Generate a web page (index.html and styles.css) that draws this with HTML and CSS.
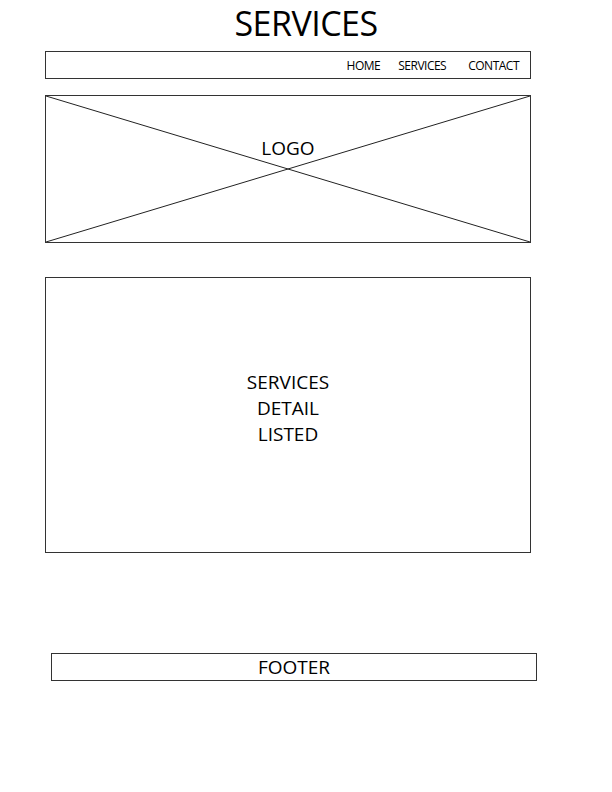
FILE: index.html
```html
<!DOCTYPE html>
<html lang="en">
  <head>
    <meta charset="UTF-8" />
    <meta name="viewport" content="width=device-width, initial-scale=1.0" />
    <title>Services</title>
    <link rel="stylesheet" href="styles.css">
  </head>
  <body>
    <h1 class="page-title">SERVICES</h1>
    <nav class="frame nav-bar">
      <a href="#">HOME</a>
      <a href="#">SERVICES</a>
      <a class="nav-last" href="#">CONTACT</a>
    </nav>
    <div class="frame logo-box">
      <svg class="cross" viewBox="0 0 100 100" preserveAspectRatio="none">
        <line x1="0" y1="0" x2="100" y2="100" vector-effect="non-scaling-stroke" />
        <line x1="100" y1="0" x2="0" y2="100" vector-effect="non-scaling-stroke" />
      </svg>
      <span class="logo-text">LOGO</span>
    </div>
    <main class="frame services-box">
      <p>SERVICES<br>DETAIL<br>LISTED</p>
    </main>
    <footer class="frame footer-bar">FOOTER</footer>
  </body>
</html>
```

FILE: styles.css
```css
* {
  box-sizing: border-box;
}

body {
  margin: 0;
  font-family: "Open Sans", Arial, sans-serif;
  color: #000;
  background: #fff;
}

a {
  color: #000;
  text-decoration: none;
}

.page-title {
  margin: 0;
  height: 51px;
  text-align: center;
  font-size: 34px;
  font-weight: 400;
  line-height: 46px;
  letter-spacing: -0.5px;
}

.frame {
  width: 486px;
  margin-left: 45px;
  border: 1px solid #333;
}

.nav-bar {
  height: 28px;
  display: flex;
  justify-content: flex-end;
  align-items: center;
  gap: 18px;
  padding-right: 11px;
  font-size: 12px;
  letter-spacing: -0.5px;
}

.nav-bar .nav-last {
  margin-left: 4px;
}

.logo-box {
  position: relative;
  height: 148px;
  margin-top: 16px;
  padding-top: 39px;
  text-align: center;
}

.cross {
  position: absolute;
  top: 0;
  left: 0;
  width: 100%;
  height: 100%;
}

.cross line {
  stroke: #222;
  stroke-width: 1;
}

.logo-text {
  position: relative;
  font-size: 19px;
}

.services-box {
  height: 276px;
  margin-top: 34px;
  padding-bottom: 14px;
  display: flex;
  align-items: center;
  justify-content: center;
  text-align: center;
}

.services-box p {
  margin: 0;
  font-size: 19px;
  line-height: 26px;
}

.footer-bar {
  height: 28px;
  margin-top: 100px;
  margin-left: 51px;
  text-align: center;
  font-size: 19px;
  line-height: 26px;
}
```
